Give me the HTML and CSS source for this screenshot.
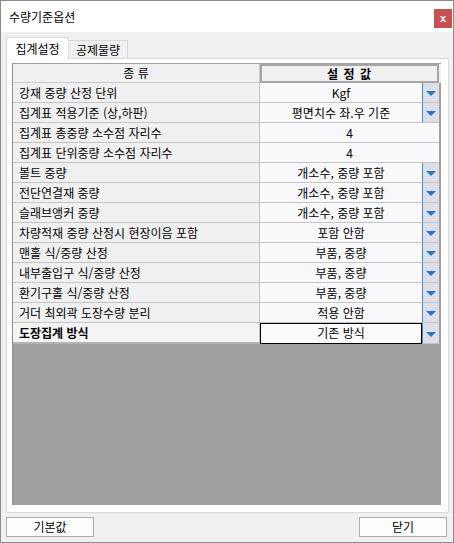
FILE: index.html
```html
<!DOCTYPE html>
<html lang="ko">
<head>
<meta charset="utf-8">
<link rel="stylesheet" href="styles.css">
</head>
<body>
<div class="window">
  <div class="titlebar">
    <span class="title">수량기준옵션</span>
    <span class="close">x</span>
  </div>
  <div class="body">
    <div class="tabs">
      <div class="tab active">집계설정</div>
      <div class="tab">공제물량</div>
    </div>
    <div class="panel">
      <div class="grid">
        <div class="hrow">
          <div class="hcell">종 류</div>
          <div class="hcell sel">설 정 값</div>
        </div>
        <div class="row"><div class="label">강재 중량 산정 단위</div><div class="value">Kgf</div><div class="dd"><i class="tri"></i></div></div>
        <div class="row"><div class="label">집계표 적용기준 (상,하판)</div><div class="value">평면치수 좌.우 기준</div><div class="dd"><i class="tri"></i></div></div>
        <div class="row"><div class="label">집계표 총중량 소수점 자리수</div><div class="value wide">4</div></div>
        <div class="row"><div class="label">집계표 단위중량 소수점 자리수</div><div class="value wide">4</div></div>
        <div class="row"><div class="label">볼트 중량</div><div class="value">개소수, 중량 포함</div><div class="dd"><i class="tri"></i></div></div>
        <div class="row"><div class="label">전단연결재 중량</div><div class="value">개소수, 중량 포함</div><div class="dd"><i class="tri"></i></div></div>
        <div class="row"><div class="label">슬래브앵커 중량</div><div class="value">개소수, 중량 포함</div><div class="dd"><i class="tri"></i></div></div>
        <div class="row"><div class="label">차량적재 중량 산정시 현장이음 포함</div><div class="value">포함 안함</div><div class="dd"><i class="tri"></i></div></div>
        <div class="row"><div class="label">맨홀 식/중량 산정</div><div class="value">부품, 중량</div><div class="dd"><i class="tri"></i></div></div>
        <div class="row"><div class="label">내부출입구 식/중량 산정</div><div class="value">부품, 중량</div><div class="dd"><i class="tri"></i></div></div>
        <div class="row"><div class="label">환기구홀 식/중량 산정</div><div class="value">부품, 중량</div><div class="dd"><i class="tri"></i></div></div>
        <div class="row"><div class="label">거더 최외곽 도장수량 분리</div><div class="value">적용 안함</div><div class="dd"><i class="tri"></i></div></div>
        <div class="row current"><div class="label">도장집계 방식</div><div class="value">기존 방식</div><div class="dd"><i class="tri"></i></div></div>
      </div>
    </div>
    <div class="footer">
      <div class="btn">기본값</div>
      <div class="btn">닫기</div>
    </div>
  </div>
</div>
</body>
</html>
```
FILE: styles.css
```css
html, body {
  margin: 0;
  padding: 0;
  background: #f0f0f0;
}
body {
  font-family: "Noto Sans CJK KR", "Noto Sans", "Liberation Sans", sans-serif;
  font-size: 12px;
  color: #000;
}
.window {
  width: 454px;
  height: 543px;
  box-sizing: border-box;
  border: 1px solid #8c8c8c;
  background: #f0f0f0;
  display: flex;
  flex-direction: column;
}
.titlebar {
  height: 31px;
  flex: none;
  background: #fff;
  display: flex;
  justify-content: space-between;
  align-items: flex-start;
  padding-left: 8px;
}
.title {
  line-height: 31px;
  font-size: 12px;
}
.close {
  width: 18px;
  height: 19px;
  margin-top: 8px;
  margin-right: 1px;
  background: #c75050;
  color: #fff;
  font-size: 11px;
  font-weight: bold;
  line-height: 18px;
  text-align: center;
  font-family: "Liberation Sans", sans-serif;
}
.body {
  flex: 1;
  padding: 5px 4px 0 5px;
  display: flex;
  flex-direction: column;
}
.tabs {
  display: flex;
  align-items: flex-end;
  height: 21px;
  flex: none;
  position: relative;
  z-index: 1;
}
.tab {
  box-sizing: border-box;
  width: 59px;
  height: 18px;
  line-height: 17px;
  text-align: center;
  border: 1px solid #d9d9d9;
  border-left: none;
  border-bottom: none;
  background: #f0f0f0;
}
.tab.active {
  width: 63px;
  height: 22px;
  line-height: 21px;
  margin-bottom: -1px;
  background: #fff;
  border-left: 1px solid #d9d9d9;
}
.panel {
  box-sizing: border-box;
  height: 455px;
  flex: none;
  background: #fff;
  border: 1px solid #d9d9d9;
  padding: 4px 7px 7px 5px;
  display: flex;
  flex-direction: column;
}
.grid {
  flex: 1;
  background: #a0a0a0;
  display: flex;
  flex-direction: column;
  border-top: 1px solid #a0a0a0;
  border-left: 1px solid #8f8f8f;
}
.hrow {
  display: grid;
  grid-template-columns: 247px 179px;
  height: 19px;
  background: #f0f0f0;
}
.hcell {
  box-sizing: border-box;
  text-align: center;
  line-height: 18px;
  border-right: 1px solid #c8c8c8;
  border-bottom: 1px solid #c8c8c8;
}
.hcell.sel {
  font-weight: bold;
  border: 2px solid #a5a5a5;
  line-height: 15px;
  letter-spacing: 1px;
}
.row {
  display: grid;
  grid-template-columns: 247px 162px 17px;
  height: 20px;
}
.row > div {
  box-sizing: border-box;
  border-bottom: 1px solid #c4c4c4;
  line-height: 19px;
  white-space: nowrap;
}
.label {
  background: #f0f0f0;
  border-right: 1px solid #c4c4c4;
  padding-left: 6px;
}
.value {
  background: #f9f9fc;
  text-align: center;
}
.value.wide {
  grid-column: span 2;
}
.row > .dd {
  background: #dedee6;
  border-left: 1px solid #3d8fdc;
  display: flex;
  align-items: center;
  justify-content: center;
}
.tri {
  display: block;
  width: 0;
  height: 0;
  margin-top: 2px;
  border-left: 5px solid transparent;
  border-right: 5px solid transparent;
  border-top: 5px solid #1f78cf;
}
.row.current .label {
  font-weight: bold;
  background: #f4f4f4;
  border-bottom: 2px solid #b4b4b4;
}
.row.current .value {
  border: 1px solid #000;
  line-height: 18px;
  background: #fbfbfd;
}
.footer {
  display: flex;
  justify-content: space-between;
  margin-top: 4px;
  padding-right: 2px;
}
.btn {
  box-sizing: border-box;
  width: 88px;
  height: 20px;
  line-height: 18px;
  text-align: center;
  background: #fdfdfd;
  border: 1px solid #adadad;
}
```
